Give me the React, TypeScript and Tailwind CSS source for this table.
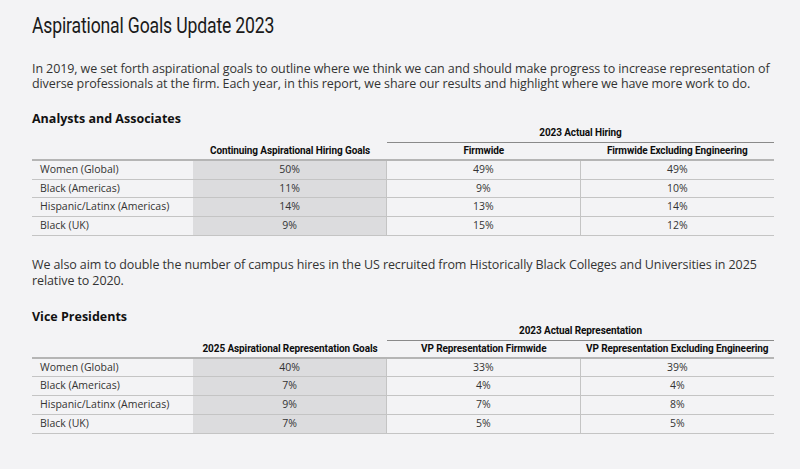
import React from "react"

type Row = { label: string; goal: string; a: string; b: string }

const hiring: Row[] = [
  { label: "Women (Global)", goal: "50%", a: "49%", b: "49%" },
  { label: "Black (Americas)", goal: "11%", a: "9%", b: "10%" },
  { label: "Hispanic/Latinx (Americas)", goal: "14%", a: "13%", b: "14%" },
  { label: "Black (UK)", goal: "9%", a: "15%", b: "12%" },
]

const vps: Row[] = [
  { label: "Women (Global)", goal: "40%", a: "33%", b: "39%" },
  { label: "Black (Americas)", goal: "7%", a: "4%", b: "4%" },
  { label: "Hispanic/Latinx (Americas)", goal: "9%", a: "7%", b: "8%" },
  { label: "Black (UK)", goal: "7%", a: "5%", b: "5%" },
]

const headFont = { fontFamily: 'Roboto, "Open Sans", sans-serif' }

function GoalsTable({ group, goalHead, aHead, bHead, rows }: { group: string; goalHead: string; aHead: string; bHead: string; rows: Row[] }) {
  return (
    <div className="text-[10.5px] text-[#333]">
      {/* group header over the actual columns */}
      <div className="grid grid-cols-[161px_194px_1fr_1fr]" style={headFont}>
        <div />
        <div />
        <div className="col-span-2 whitespace-nowrap border-b border-[#8a8a8a] pb-[3px] text-center text-[10px] font-bold leading-[12px] tracking-[-0.1px] text-[#0d0d0d]">
          {group}
        </div>
      </div>
      <div className="grid grid-cols-[161px_194px_1fr_1fr] border-b-2 border-[#b5b5b5] text-[10px] font-bold leading-[12px] tracking-[-0.1px] text-[#0d0d0d]" style={headFont}>
        <div />
        <div className="whitespace-nowrap py-[2px] text-center">{goalHead}</div>
        <div className="whitespace-nowrap py-[2px] text-center">{aHead}</div>
        <div className="whitespace-nowrap py-[2px] text-center">{bHead}</div>
      </div>
      {rows.map((r) => (
        <div key={r.label} className="grid h-[18.7px] grid-cols-[161px_194px_1fr_1fr] border-b border-[#c4c4c4] leading-[17.7px]">
          <div className="whitespace-nowrap pl-2">{r.label}</div>
          <div className="border-r border-[#c4c4c4] bg-[#dcdcde] text-center">{r.goal}</div>
          <div className="border-r border-[#c4c4c4] text-center">{r.a}</div>
          <div className="text-center">{r.b}</div>
        </div>
      ))}
    </div>
  )
}

export default function App() {
  return (
    <div className="min-h-[469px] w-[800px] bg-[#f3f3f5] pl-8 pr-[26px] pt-[12px] text-[#333]" style={{ fontFamily: '"Open Sans", "Noto Sans", sans-serif' }}>
      <h1 className="whitespace-nowrap text-[#1a1a1a]">
        <span
          className="inline-block origin-left scale-x-[0.8] text-[22px] leading-[28px] tracking-[-0.2px]"
          style={{ fontFamily: 'Roboto, "Liberation Sans", sans-serif' }}
        >
          Aspirational Goals Update 2023
        </span>
      </h1>
      <p className="mt-[21px] text-[12.5px] leading-[15px] tracking-[-0.1px]">
        In 2019, we set forth aspirational goals to outline where we think we can and should make progress to increase representation of diverse professionals at the firm. Each year, in this report, we share our results and highlight where we have more work to do.
      </p>

      <h2 className="mt-[20px] text-[12.5px] font-bold leading-[16px] text-[#111]">Analysts and Associates</h2>
      <GoalsTable group="2023 Actual Hiring" goalHead="Continuing Aspirational Hiring Goals" aHead="Firmwide" bHead="Firmwide Excluding Engineering" rows={hiring} />

      <p className="mt-[21px] text-[12.5px] leading-[16px] tracking-[-0.1px]">
        We also aim to double the number of campus hires in the US recruited from Historically Black Colleges and Universities in 2025 relative to 2020.
      </p>

      <h2 className="mt-[20px] text-[12.5px] font-bold leading-[16px] text-[#111]">Vice Presidents</h2>
      <GoalsTable group="2023 Actual Representation" goalHead="2025 Aspirational Representation Goals" aHead="VP Representation Firmwide" bHead="VP Representation Excluding Engineering" rows={vps} />
    </div>
  )
}
